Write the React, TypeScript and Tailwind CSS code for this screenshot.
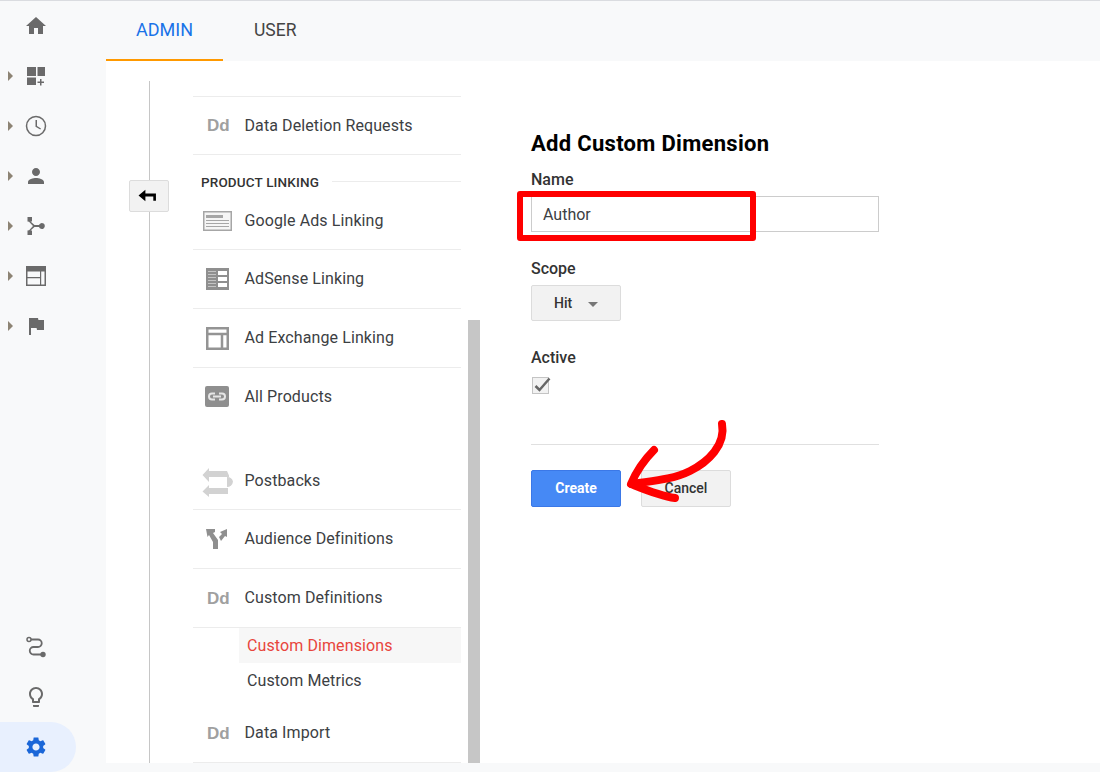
const roboto = "font-['Roboto',sans-serif]";

function SideIcon({ d, caret, children }: { d?: string; caret?: boolean; children?: React.ReactNode }) {
  return (
    <div className="relative flex h-[50px] w-[76px] items-center justify-center pr-[4px]">
      {caret ? (
        <span className="absolute left-[8px] top-[20px] h-0 w-0 border-y-[5px] border-l-[5px] border-y-transparent border-l-[#8d8474]" />
      ) : null}
      <svg viewBox="0 0 24 24" className="h-[24px] w-[24px] fill-[#6a6a6a]">
        {d ? <path d={d} /> : children}
      </svg>
    </div>
  );
}

function Sidebar() {
  return (
    <aside className="flex h-full w-[106px] shrink-0 flex-col justify-between">
      <div>
        <SideIcon d="M10 20v-6h4v6h5v-8h3L12 3 2 12h3v8z" />
        <SideIcon caret>
          <path d="M3 3h9v9H3zM13.500 3H21v9h-7.500zM3 13.500h9V21H3zM16 15h1.500v2.500H20V19h-2.500v2.500H16V19h-2.500v-1.500H16z" />
        </SideIcon>
        <SideIcon caret>
          <circle cx="12" cy="12" r="9.500" fill="none" stroke="#6a6a6a" strokeWidth="1.500" />
          <path d="M11.500 6h1.500v6l4 2.400-.7 1.100-4.800-2.800z" />
        </SideIcon>
        <SideIcon
          caret
          d="M12 12c2.210 0 4-1.790 4-4s-1.790-4-4-4-4 1.790-4 4 1.790 4 4 4zm0 2c-2.670 0-8 1.340-8 4v2h16v-2c0-2.660-5.330-4-8-4z"
        />
        <SideIcon caret>
          <path d="M3.500 3h4.500v4.500H6.500L10.500 11H15a3 3 0 1 1 0 2h-4.500l-4 3.500H8V21H3.500v-4.500l1.600-.3L9 12 5 7.800l-1.500-.3z" />
        </SideIcon>
        <SideIcon caret>
          <path
            fillRule="evenodd"
            d="M2 2h20v20H2zM3.500 7.500v5.500h12.500V7.500zM17.200 7.500V20.500h3.300V7.500zM3.500 14.200v6.300h12.500v-6.300z"
          />
        </SideIcon>
        <SideIcon caret d="M14.400 6 14 4H5v17h2v-7h5.600l.4 2h7V6z" />
      </div>
      <div>
        <SideIcon>
          <circle cx="5" cy="4.500" r="2" fill="none" stroke="#6a6a6a" strokeWidth="1.500" />
          <circle cx="19" cy="19.500" r="2.700" />
          <path
            d="M7 4.500h7a3.500 3.500 0 0 1 0 7.500H9.500a3 3 0 0 0 0 7.500H17"
            fill="none"
            stroke="#6a6a6a"
            strokeWidth="1.800"
          />
        </SideIcon>
        <SideIcon d="M9 21c0 .55.45 1 1 1h4c.55 0 1-.45 1-1v-1H9v1zm3-19C8.140 2 5 5.140 5 9c0 2.380 1.190 4.470 3 5.740V17c0 .55.45 1 1 1h6c.55 0 1-.45 1-1v-2.260c1.810-1.270 3-3.360 3-5.740 0-3.860-3.140-7-7-7zm2.850 11.100-.85.6V16h-4v-2.300l-.85-.6C7.800 12.160 7 10.630 7 9c0-2.760 2.240-5 5-5s5 2.240 5 5c0 1.630-.8 3.160-2.150 4.100z" />
        <div className="flex h-[50px] w-[76px] items-center justify-center rounded-r-[25px] bg-[#e8f0fe] pr-[4px]">
          <svg viewBox="0 0 24 24" className="h-[24px] w-[24px] fill-[#1a66d8]">
            <path d="M19.140 12.940c.04-.3.06-.61.06-.94 0-.32-.02-.64-.07-.94l2.030-1.580c.18-.14.23-.41.12-.61l-1.920-3.320c-.12-.22-.37-.29-.59-.22l-2.390.96c-.5-.38-1.030-.7-1.620-.94l-.36-2.540c-.04-.24-.24-.41-.48-.41h-3.840c-.24 0-.43.17-.47.41l-.36 2.540c-.59.24-1.130.57-1.620.94l-2.390-.96c-.22-.08-.47 0-.59.22L2.740 8.870c-.12.21-.08.47.12.61l2.030 1.580c-.05.3-.09.63-.09.94s.02.64.07.94l-2.030 1.580c-.18.14-.23.41-.12.61l1.920 3.320c.12.22.37.29.59.22l2.390-.96c.5.38 1.030.7 1.620.94l.36 2.540c.05.24.24.41.48.41h3.840c.24 0 .44-.17.47-.41l.36-2.540c.59-.24 1.130-.56 1.620-.94l2.390.96c.22.08.47 0 .59-.22l1.920-3.320c.12-.22.07-.47-.12-.61l-2.010-1.580zM12 15.600c-1.980 0-3.600-1.620-3.600-3.600s1.620-3.600 3.600-3.600 3.600 1.620 3.600 3.600-1.620 3.600-3.600 3.600z" />
          </svg>
        </div>
      </div>
    </aside>
  );
}

function Dd() {
  return (
    <span className="ml-[2px] font-['Liberation_Sans',sans-serif] text-[17px] font-bold leading-none text-[#a0a0a0]">
      Dd
    </span>
  );
}

function GoogleAdsIcon() {
  return (
    <svg viewBox="0 0 29 20" className="h-[20px] w-[29px]">
      <rect x="0.750" y="0.750" width="27.500" height="18.500" fill="#f5f5f5" stroke="#a6a6a6" strokeWidth="1.500" />
      <path d="M3 4h17v3H3z" fill="#a6a6a6" />
      <path d="M3 9h23v1H3zM3 12h23v1H3zM3 15h23v1H3z" fill="#a6a6a6" />
    </svg>
  );
}

function AdSenseIcon() {
  return (
    <svg viewBox="0 0 23 22" className="h-[22px] w-[23px]">
      <rect width="23" height="22" fill="#8f8f8f" />
      <path d="M12 3h9v4h-9zM12 9h9v4h-9zM12 15h9v4h-9z" fill="#fff" />
      <path d="M2 3h8v1H2zM2 6h8v1H2zM2 9h8v1H2zM2 12h8v1H2zM2 15h8v1H2zM2 18h8v1H2z" fill="#c4c4c4" />
    </svg>
  );
}

function AdExchangeIcon() {
  return (
    <svg viewBox="0 0 23 23" className="h-[23px] w-[23px]">
      <path d="M1.250 1.250h20.500v20.500H1.250zM1.250 7h20.500M16 7v14.750" fill="none" stroke="#949494" strokeWidth="2.500" />
    </svg>
  );
}

function AllProductsIcon() {
  return (
    <svg viewBox="0 0 24 21" className="h-[21px] w-[24px]">
      <rect width="24" height="21" rx="2" fill="#8f8f8f" />
      <path d="M10 7.500H7a3 3 0 0 0 0 6h3M14 7.500h3a3 3 0 0 1 0 6h-3M8 10.500h8" fill="none" stroke="#e6e6e6" strokeWidth="2" />
    </svg>
  );
}

function PostbacksIcon() {
  return (
    <svg viewBox="0 0 32 32" className="h-[32px] w-[32px]">
      <path d="M1.500 10 8 3v3h18l2 4.500V12H8v5z" fill="#d2d2d2" />
      <path d="M32 16.500a6 6 0 0 1-6 5.500v-10a6 6 0 0 1 6 4.500z" fill="#d2d2d2" />
      <path d="M1.500 26.500 8 20v3h19v6H8v3z" fill="#d2d2d2" />
    </svg>
  );
}

function AudienceIcon() {
  return (
    <svg viewBox="0 0 24 22" className="h-[22px] w-[24px]">
      <path d="M1 1h9v3L8 5l5 7v9H8v-7L4 7 2.500 9z" fill="#8f8f8f" />
      <path d="M14 9l3-3-2-2 7-3v8l-2-1-4 5z" fill="#8f8f8f" />
    </svg>
  );
}

function MenuRow({ icon, label, border = true, height = "h-[59px]" }: { icon: React.ReactNode; label: string; border?: boolean; height?: string }) {
  return (
    <div className={`flex shrink-0 items-center ${height} ${border ? "border-b border-[#ececec]" : ""}`}>
      <div className="flex w-[51.500px] shrink-0 items-center justify-center pr-[3px]">{icon}</div>
      <span className="text-[16px] tracking-[0.1px] text-[#3c4043]">{label}</span>
    </div>
  );
}

function Menu() {
  return (
    <div className="flex w-[268px] shrink-0 flex-col pt-[35px]">
      <div className="shrink-0 border-t border-[#ececec]">
        <MenuRow icon={<Dd />} label="Data Deletion Requests" height="h-[58px]" />
      </div>
      <div className="flex h-[36px] shrink-0 items-start pl-[8px] pt-[19px]">
        <span className="text-[13.500px] font-medium leading-[16px] tracking-[0.15px] text-[#333]">PRODUCT LINKING</span>
        <span className="ml-[13px] mt-[7px] h-px flex-1 bg-[#ececec]" />
      </div>
      <MenuRow icon={<GoogleAdsIcon />} label="Google Ads Linking" height="h-[59px] pt-[2px]" />
      <MenuRow icon={<AdSenseIcon />} label="AdSense Linking" />
      <MenuRow icon={<AdExchangeIcon />} label="Ad Exchange Linking" />
      <MenuRow icon={<AllProductsIcon />} label="All Products" border={false} height="h-[57px]" />
      <div className="h-[26px] shrink-0" />
      <MenuRow icon={<PostbacksIcon />} label="Postbacks" height="h-[59px] pt-[2px]" />
      <MenuRow icon={<AudienceIcon />} label="Audience Definitions" />
      <MenuRow icon={<Dd />} label="Custom Definitions" />
      <div className="ml-[46px] flex h-[35px] shrink-0 items-center bg-[#f7f7f7] pl-[8px] text-[16px] tracking-[0.1px] text-[#e8453c]">
        Custom Dimensions
      </div>
      <div className="ml-[46px] flex h-[34px] shrink-0 items-center pl-[8px] pt-[2px] text-[16px] tracking-[0.1px] text-[#3c4043]">
        Custom Metrics
      </div>
      <div className="flex h-[66px] shrink-0 items-center border-b border-[#ececec] pt-[7px]">
        <div className="flex w-[51.500px] shrink-0 items-center justify-center pr-[3px]">
          <Dd />
        </div>
        <span className="text-[16px] tracking-[0.1px] text-[#3c4043]">Data Import</span>
      </div>
    </div>
  );
}

function Form() {
  return (
    <div className="w-[348px] shrink-0 pt-[68px] text-[#333]">
      <h1 className="text-[22px] font-bold leading-[30px] tracking-[0.3px] text-black">Add Custom Dimension</h1>
      <div className="mt-[11px] text-[16px] font-medium leading-[20px]">Name</div>
      <div className="mt-[6px] flex h-[36px] items-center border border-[#ccc] px-[11px] pt-[2px] text-[16px] text-[#3c4043]">
        Author
      </div>
      <div className="mt-[27px] text-[16px] font-medium leading-[20px]">Scope</div>
      <div className="mt-[6px] flex h-[36px] w-[90px] items-center rounded-[2px] border border-[#dcdcdc] bg-[#f2f2f2] pl-[22px] text-[14px] font-medium">
        Hit
        <span className="ml-[16px] mt-[3px] h-0 w-0 border-x-[5px] border-t-[5px] border-x-transparent border-t-[#777]" />
      </div>
      <div className="mt-[27px] text-[16px] font-medium leading-[20px]">Active</div>
      <div className="ml-[1px] mt-[9px] h-[17px] w-[17px] border border-[#c4c4c4] bg-[#f2f2f2]">
        <svg viewBox="0 0 17 17" className="h-[17px] w-[17px] overflow-visible">
          <path d="M2.500 8 L6.500 12 L16.500 0.500" fill="none" stroke="#666" strokeWidth="2.500" />
        </svg>
      </div>
      <div className="mt-[50px] h-px bg-[#e0e0e0]" />
      <div className="mt-[25px] flex gap-[20px]">
        <button className="h-[37px] w-[90px] rounded-[2px] border border-[#3b78e7] bg-[#4689f5] text-[14px] font-bold text-white">
          Create
        </button>
        <button className="h-[37px] w-[90px] rounded-[2px] border border-[#dcdcdc] bg-[#f2f2f2] text-[14px] font-medium text-[#333]">
          Cancel
        </button>
      </div>
    </div>
  );
}

export default function App() {
  return (
    <div className={`relative h-[772px] w-[1100px] overflow-hidden border-t border-[#dadce0] bg-[#f8f9fa] ${roboto}`}>
      <div className="flex h-[771px]">
        <Sidebar />
        <div className="flex flex-1 flex-col">
          <div className="flex h-[60px] items-stretch text-[18px]">
            <div className="flex w-[117px] items-center justify-center border-b-2 border-[#f90] pb-[1px] text-[#1a73e8]">ADMIN</div>
            <div className="flex items-center pb-[2px] pl-[31px] text-[17.500px] text-[#444]">USER</div>
          </div>
          <div className="flex h-[702px] bg-white pl-[43px]">
            <div className="relative mt-[20px] w-[44px] shrink-0 border-l border-[#c6c6c6]">
              <div className="absolute left-[-21px] top-[99px] flex h-[32px] w-[40px] items-center justify-center rounded-[2px] border border-[#dcdcdc] bg-[#f2f2f2] pb-[1px] pr-[3px]">
                <svg viewBox="0 0 18 12" className="h-[13px] w-[19px]">
                  <path d="M0.500 6 7 0.500V4h10v7h-2.500V7H7v4.500z" fill="#000" />
                </svg>
              </div>
            </div>
            <Menu />
            <div className="ml-[7px] mt-[259px] w-[12px] shrink-0 bg-[#c6c6c6]" />
            <div className="ml-[51px]">
              <Form />
            </div>
          </div>
        </div>
      </div>
      {/* annotations drawn over the page */}
      <div className="absolute left-[517px] top-[190px] h-[50px] w-[239px] rounded-[3px] border-[6px] border-[#f00]" />
      <svg viewBox="0 0 1100 772" className="pointer-events-none absolute left-0 top-[-1px] h-[772px] w-[1100px]">
        <path
          d="M722 424C726 445 708 462 690 471C672 480 650 481 632 484"
          fill="none"
          stroke="#f00"
          strokeWidth="8"
          strokeLinecap="round"
        />
        <path d="M654 450C644 460 636 472 631 484C646 490 660 496 675 498" fill="none" stroke="#f00" strokeWidth="8" strokeLinecap="round" strokeLinejoin="round" />
      </svg>
    </div>
  );
}
